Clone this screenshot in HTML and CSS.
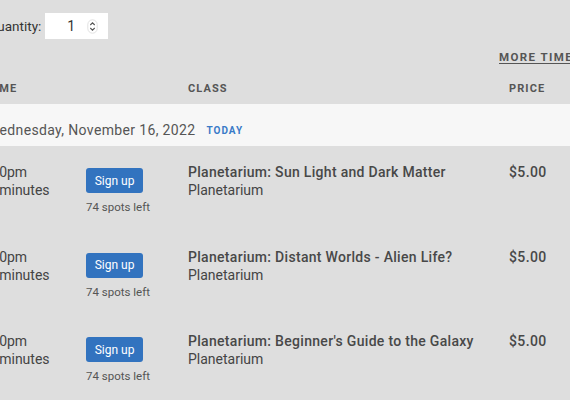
FILE: index.html
```html
<!DOCTYPE html>
<html>
<head>
<meta charset="utf-8">
<link rel="stylesheet" href="styles.css">
</head>
<body>
<div class="page">
  <div class="qty-row">
    <label class="qty-label">Quantity:</label>
    <div class="qty-input">
      <span class="qty-value">1</span>
      <svg class="spin" width="11" height="15" viewBox="0 0 11 15">
        <rect x="0.8" y="0.8" width="9.4" height="13.4" rx="4.7" fill="#fff" stroke="#d9d9d9" stroke-width="0.8"/>
        <path d="M3.3 6 L5.5 3.8 L7.7 6" fill="none" stroke="#555" stroke-width="1.1"/>
        <path d="M3.3 9 L5.5 11.2 L7.7 9" fill="none" stroke="#555" stroke-width="1.1"/>
      </svg>
    </div>
  </div>
  <div class="more-row"><a class="more">MORE TIMES</a></div>
  <div class="grid head">
    <div class="h-time">TIME</div>
    <div></div>
    <div>CLASS</div>
    <div>PRICE</div>
  </div>
  <div class="date-band">
    <span class="date">Wednesday, November 16, 2022</span>
    <span class="today">TODAY</span>
  </div>
  <div class="grid row">
    <div class="time">7:00pm<br>60 minutes</div>
    <div class="signup"><button class="btn">Sign up</button><div class="spots">74 spots left</div></div>
    <div class="cls"><div class="title">Planetarium: Sun Light and Dark Matter</div><div class="sub">Planetarium</div></div>
    <div class="price">$5.00</div>
  </div>
  <div class="grid row">
    <div class="time">7:00pm<br>60 minutes</div>
    <div class="signup"><button class="btn">Sign up</button><div class="spots">74 spots left</div></div>
    <div class="cls"><div class="title">Planetarium: Distant Worlds - Alien Life?</div><div class="sub">Planetarium</div></div>
    <div class="price">$5.00</div>
  </div>
  <div class="grid row">
    <div class="time">7:00pm<br>60 minutes</div>
    <div class="signup"><button class="btn">Sign up</button><div class="spots">74 spots left</div></div>
    <div class="cls"><div class="title">Planetarium: Beginner's Guide to the Galaxy</div><div class="sub">Planetarium</div></div>
    <div class="price">$5.00</div>
  </div>
</div>
</body>
</html>
```
FILE: styles.css
```css
html, body {
  margin: 0;
  padding: 0;
  background: #dedede;
  overflow: hidden;
}
body {
  font-family: Roboto, "Liberation Sans", sans-serif;
  color: #444;
  width: 570px;
  height: 400px;
}
.page {
  margin-left: -20px;
  width: 640px;
  padding-top: 13px;
}
.qty-row {
  display: flex;
  align-items: center;
  height: 26px;
  padding-left: 8px;
}
.qty-label {
  font-size: 13.5px;
  color: #333;
  margin-right: 4px;
}
.qty-input {
  width: 63px;
  height: 26px;
  background: #fff;
  display: flex;
  align-items: center;
  box-sizing: border-box;
  padding-left: 22px;
}
.qty-value {
  font-size: 14px;
  color: #333;
  width: 20px;
}
.spin {
  display: block;
}
.more-row {
  margin-top: 7px;
  height: 14px;
  padding-left: 519px;
}
.more {
  font-size: 11.5px;
  font-weight: 700;
  letter-spacing: 1.4px;
  line-height: 14px;
  color: #555;
  text-decoration: underline;
  text-underline-offset: 2px;
  white-space: nowrap;
}
.grid {
  display: grid;
  grid-template-columns: 106px 102px 321px 1fr;
}
.head {
  margin-top: 22px;
  padding-bottom: 8px;
  font-size: 11px;
  font-weight: 700;
  letter-spacing: 1.1px;
  line-height: 14px;
  color: #555;
}
.h-time {
  padding-left: 7px;
}
.date-band {
  background: #f7f7f7;
  height: 42px;
  box-sizing: border-box;
  padding-left: 7px;
  display: flex;
  align-items: center;
  padding-top: 10px;
}
.date {
  font-size: 14px;
  letter-spacing: 0.35px;
  color: #555;
}
.today {
  margin-left: 11px;
  font-size: 10px;
  font-weight: 700;
  letter-spacing: 1px;
  color: #3a7bc8;
}
.row {
  height: 84.5px;
  box-sizing: border-box;
  padding-top: 17px;
}
.time {
  font-size: 14px;
  line-height: 18px;
  color: #444;
}
.signup {
  padding-top: 5px;
}
.btn {
  display: block;
  width: 57px;
  height: 25px;
  border: none;
  border-radius: 3px;
  background: #3273bf;
  color: #fff;
  font-family: Roboto, "Liberation Sans", sans-serif;
  font-size: 12px;
  padding: 0;
}
.spots {
  margin-top: 6px;
  font-size: 11.5px;
  line-height: 16px;
  color: #555;
}
.title {
  font-size: 14px;
  font-weight: 500;
  letter-spacing: 0.3px;
  line-height: 18px;
  color: #484848;
}
.sub {
  font-size: 14px;
  line-height: 18px;
  color: #444;
}
.price {
  font-size: 14px;
  font-weight: 500;
  letter-spacing: 0.4px;
  line-height: 18px;
  color: #484848;
}
```
